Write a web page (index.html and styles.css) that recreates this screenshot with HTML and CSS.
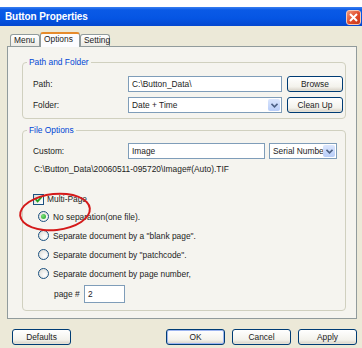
FILE: index.html
```html
<!doctype html>
<html>
<head>
    <title>Button Properties</title>
    <link rel="stylesheet" href="styles.css">
</head>
<body>
    <div class="window">
        <div class="titlebar">
            <span class="title">Button Properties</span>
            <span class="close">
                <svg width="9" height="9" viewBox="0 0 9 9"><path d="M1 1 L8 8 M8 1 L1 8" stroke="#fff" stroke-width="2" /></svg>
            </span>
        </div>
        <div class="dialog">
            <div class="tabs">
                <div class="tab tab-menu">Menu</div>
                <div class="tab tab-options selected">Options</div>
                <div class="tab tab-setting">Setting</div>
            </div>
            <div class="panel">
                <fieldset class="group group-path">
                    <legend>Path and Folder</legend>
                    <div class="row">
                        <span class="label">Path:</span>
                        <span class="field field-wide">C:\Button_Data\</span>
                        <span class="button button-side">Browse</span>
                    </div>
                    <div class="row">
                        <span class="label">Folder:</span>
                        <span class="field field-wide select">Date + Time<span class="arrow"><svg width="7" height="5" viewBox="0 0 7 5"><path d="M0.5 0.8 L3.5 3.8 L6.5 0.8" fill="none" stroke="#4d6185" stroke-width="1.6" /></svg></span></span>
                        <span class="button button-side">Clean Up</span>
                    </div>
                </fieldset>
                <fieldset class="group group-file">
                    <legend>File Options</legend>
                    <div class="row">
                        <span class="label">Custom:</span>
                        <span class="field field-custom">Image</span>
                        <span class="field field-serial select">Serial Number<span class="arrow"><svg width="7" height="5" viewBox="0 0 7 5"><path d="M0.5 0.8 L3.5 3.8 L6.5 0.8" fill="none" stroke="#4d6185" stroke-width="1.6" /></svg></span></span>
                    </div>
                    <div class="filename">C:\Button_Data\20060511-095720\Image#(Auto).TIF</div>
                    <div class="check-row">
                        <span class="checkbox"><svg width="9" height="9" viewBox="0 0 9 9"><path d="M1.5 4.2 L3.6 6.4 L7.6 2" fill="none" stroke="#21a121" stroke-width="1.8" /></svg></span>
                        <span>Multi-Page</span>
                    </div>
                    <div class="radios">
                        <div class="radio-row"><span class="radio checked"></span><span>No separation(one file).</span></div>
                        <div class="radio-row"><span class="radio"></span><span>Separate document by a "blank page".</span></div>
                        <div class="radio-row"><span class="radio"></span><span>Separate document by "patchcode".</span></div>
                        <div class="radio-row"><span class="radio"></span><span>Separate document by page number,</span></div>
                    </div>
                    <div class="page-row">
                        <span class="page-label">page #</span>
                        <span class="field field-page">2</span>
                    </div>
                </fieldset>
                <div class="mark"></div>
            </div>
            <div class="footer">
                <span class="button button-defaults">Defaults</span>
                <span class="spacer"></span>
                <span class="button button-ok">OK</span>
                <span class="button button-cancel">Cancel</span>
                <span class="button button-apply">Apply</span>
            </div>
        </div>
    </div>
</body>
</html>
```

FILE: styles.css
```css
html, body {
    margin: 0;
    background: #fff;
}
body {
    font-family: "Liberation Sans", Arial, sans-serif;
    font-size: 8.4px;
    color: #1c1c1c;
}
.window {
    width: 362px;
    margin-top: 7px;
}
/* Title bar */
.titlebar {
    height: 19px;
    display: flex;
    align-items: center;
    justify-content: space-between;
    padding: 0 1px 0 5px;
    background: linear-gradient(#3a7ff0 0, #0a5ae6 3px, #0555e3 60%, #0447cf 100%);
}
.title {
    color: #fff;
    font-weight: bold;
    font-size: 10px;
    letter-spacing: -0.1px;
}
.close {
    width: 13px;
    height: 13px;
    margin-top: 2px;
    border: 1px solid #f4c9b8;
    border-radius: 3px;
    background: linear-gradient(135deg, #f49a7a, #e0492a 55%, #c7381b);
    display: flex;
    align-items: center;
    justify-content: center;
}
/* Dialog body */
.dialog {
    height: 322px;
    background: #ece9d8;
    overflow: hidden;
}
.tabs {
    display: flex;
    align-items: flex-end;
    height: 20px;
    padding-left: 10px;
    position: relative;
    z-index: 1;
}
.tab {
    height: 11px;
    line-height: 11px;
    padding: 0 3px;
    border: 1px solid #919b9c;
    border-bottom: none;
    border-radius: 3px 3px 0 0;
    background: linear-gradient(#fff, #ecebe5);
    box-sizing: content-box;
}
.tab-menu { width: 22px; }
.tab-setting { width: 22px; }
.tab-options {
    width: 32px;
    height: 13px;
    margin-bottom: -1px;
    border-top: 2px solid #e68b2c;
    background: #fcfcfe;
}
.panel {
    position: relative;
    margin-left: 7px;
    width: 348px;
    height: 271px;
    border: 1px solid #919b9c;
    background: #f5f4ef;
}
/* Group boxes */
.group {
    margin: 10px 0 0 14px;
    width: 324px;
    border: 1px solid #d0d0bf;
    border-radius: 4px;
    padding: 0 0 0 10px;
    box-sizing: border-box;
}
.group legend {
    color: #0046d5;
    padding: 0 2px;
    margin-left: -6px;
    line-height: 11px;
}
.group-path {
    padding-top: 8px;
    padding-bottom: 5px;
}
.group-file {
    margin-top: 6px;
    padding-top: 7px;
    height: 186px;
}
.row {
    display: flex;
    align-items: center;
    height: 16px;
    margin-bottom: 5px;
}
.group-path .row:last-child {
    margin-bottom: 0;
}
.label {
    width: 95px;
}
.field {
    height: 14px;
    line-height: 14px;
    border: 1px solid #7f9db9;
    background: #fff;
    padding-left: 3px;
    box-sizing: content-box;
    position: relative;
}
.field-wide {
    width: 149px;
}
.field-custom {
    width: 132px;
}
.field-serial {
    width: 63px;
    margin-left: 4px;
    white-space: nowrap;
    overflow: hidden;
}
.select .arrow {
    position: absolute;
    right: 1px;
    top: 1px;
    width: 12px;
    height: 12px;
    border-radius: 2px;
    background: linear-gradient(#dbe6fd, #b8cdf8);
    display: flex;
    align-items: center;
    justify-content: center;
}
.button {
    display: flex;
    align-items: center;
    justify-content: center;
    height: 14px;
    border: 1px solid #003c74;
    border-radius: 3px;
    background: linear-gradient(#fff, #f3f2ec 70%, #d6d0c5);
    box-shadow: inset 0 -1px 0 #e3e1d6;
}
.button-side {
    width: 54px;
    margin-left: 5px;
}
.filename {
    height: 12px;
    line-height: 12px;
    margin: -1px 0 0 1px;
}
/* Multi page options */
.check-row {
    display: flex;
    align-items: center;
    gap: 3px;
    height: 12px;
    margin-top: 18px;
}
.checkbox {
    width: 9px;
    height: 9px;
    border: 1px solid #1c5180;
    background: linear-gradient(135deg, #dcdcd7, #fff);
    display: flex;
    align-items: center;
    justify-content: center;
}
.radios {
    margin-top: 2px;
    padding-left: 5px;
}
.radio-row {
    display: flex;
    align-items: center;
    gap: 4px;
    height: 19px;
}
.radio {
    width: 9px;
    height: 9px;
    border: 1px solid #1c5180;
    border-radius: 50%;
    background: radial-gradient(circle at 65% 65%, #fff, #d9d8d2);
    display: flex;
    align-items: center;
    justify-content: center;
}
.radio.checked::after {
    content: "";
    width: 5px;
    height: 5px;
    border-radius: 50%;
    background: radial-gradient(circle at 35% 35%, #7be07b, #21a121);
}
.page-row {
    display: flex;
    align-items: center;
    height: 18px;
    margin-top: 2px;
    padding-left: 21px;
}
.page-label {
    width: 30px;
}
.field-page {
    width: 36px;
    height: 16px;
    line-height: 16px;
}
/* Red annotation ring */
.mark {
    position: absolute;
    left: 11px;
    top: 146px;
    width: 68px;
    height: 34px;
    border: 2px solid #d41a1a;
    border-radius: 50%;
    transform: rotate(-6deg);
}
/* Bottom buttons */
.footer {
    display: flex;
    align-items: center;
    padding: 10px 5px 0 12px;
}
.footer .button {
    width: 57px;
}
.spacer {
    flex: 1;
}
.button-ok {
    box-shadow: inset 0 0 0 1px #9db5f0;
}
.button-cancel {
    margin-left: 7px;
}
.button-apply {
    margin-left: 7px;
}
```
